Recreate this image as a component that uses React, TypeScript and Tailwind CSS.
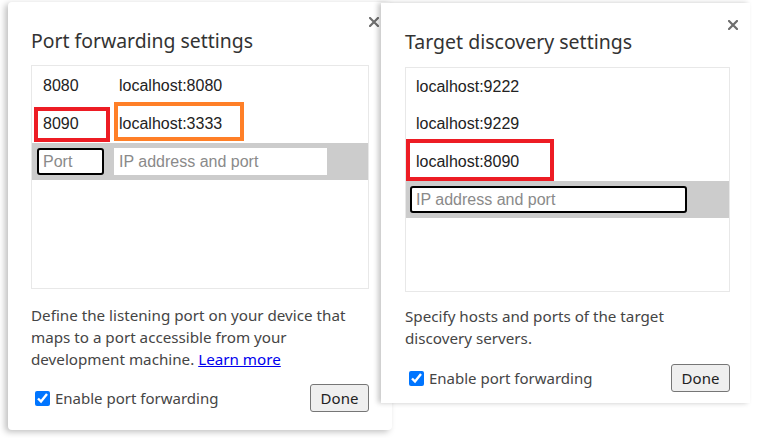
import React from "react";

const uiFont = { fontFamily: '"Noto Sans", "Open Sans", sans-serif' };

function CloseIcon() {
  return (
    <svg width="10" height="10" viewBox="0 0 10 10" className="text-[#6e6e6e]">
      <path d="M1 1 L9 9 M9 1 L1 9" stroke="currentColor" strokeWidth="2.2" strokeLinecap="square" />
    </svg>
  );
}

function Footer({ done }: { done: string }) {
  return (
    <div className="flex items-center justify-between">
      <label className="flex items-center gap-[5px] pl-[4px] text-[15px] text-[#454545]">
        <input type="checkbox" defaultChecked className="w-[15px] h-[15px] m-0 accent-[#0075ff]" />
        Enable port forwarding
      </label>
      <button className="h-[28px] w-[59px] rounded-[3px] border border-[#767676] bg-[#efefef] text-[15px] text-[#222]">
        {done}
      </button>
    </div>
  );
}

function PortForwarding() {
  return (
    <div
      className="relative w-[384px] h-[428px] shrink-0 rounded-[4px] bg-white shadow-[-3px_2px_6px_rgba(0,0,0,0.25)] px-[23px]"
      style={uiFont}
    >
      <div className="absolute right-[13px] top-[15px]">
        <CloseIcon />
      </div>
      <h2 className="pt-[25px] text-[19.4px] leading-[28px] text-[#333]">Port forwarding settings</h2>
      <div
        className="mt-[10px] h-[224px] border border-[#e8e8e8]"
        style={{ fontFamily: '"Liberation Sans", Arial, sans-serif' }}
      >
        <div className="flex h-[39px] items-center pt-[1px] text-[16px] text-[#222]">
          <span className="w-[76px] pl-[11px]">8080</span>
          <span className="pl-[11px]">localhost:8080</span>
        </div>
        <div className="flex h-[38px] items-center text-[16px] text-[#222]">
          <span className="ml-[2px] flex h-[35px] w-[76px] items-center border-[4px] border-[#ed1c24] pl-[5px]">8090</span>
          <span className="ml-[4px] -mt-[5px] flex h-[39px] w-[130px] items-center border-[4px] border-[#ff7f27] pl-[1px] pt-[5px]">
            localhost:3333
          </span>
        </div>
        <div className="flex h-[37px] items-center bg-[#cccccc]">
          <div className="ml-[5px] flex h-[27px] w-[67px] items-center rounded-[3px] border-2 border-black bg-white pl-[4px] text-[16px] text-[#8a8a8a]">
            Port
          </div>
          <div className="ml-[10px] flex h-[27px] w-[213px] items-center bg-white pl-[5px] text-[16px] text-[#8a8a8a]">
            IP address and port
          </div>
        </div>
      </div>
      <div className="mt-[15px] text-[15.2px] leading-[22px] text-[#454545]">
        <p>Define the listening port on your device that maps to a port accessible from your</p>
        <p>
          development machine. <span className="text-[#0000ee] underline">Learn more</span>
        </p>
      </div>
      <div className="mt-[14px]">
        <Footer done="Done" />
      </div>
    </div>
  );
}

function TargetDiscovery() {
  const hosts = ["localhost:9222", "localhost:9229"];
  return (
    <div
      className="relative -ml-[11px] mt-[1px] w-[369px] h-[400px] shrink-0 bg-white shadow-[-3px_0px_5px_rgba(0,0,0,0.22)] pl-[24px] pr-[20px]"
      style={uiFont}
    >
      <div className="absolute right-[12px] top-[17px]">
        <CloseIcon />
      </div>
      <h2 className="pt-[25px] text-[19.5px] leading-[28px] text-[#333]">Target discovery settings</h2>
      <div
        className="mt-[11px] h-[225px] border border-[#e8e8e8]"
        style={{ fontFamily: '"Liberation Sans", Arial, sans-serif' }}
      >
        {hosts.map((h) => (
          <div key={h} className="flex h-[37px] items-center pl-[10px] text-[16px] text-[#222]">
            {h}
          </div>
        ))}
        <div className="-mt-[3px] flex h-[42px] w-[148px] items-center border-[4px] border-[#ed1c24] pl-[6px] pt-[3px] text-[16px] text-[#222]">
          localhost:8090
        </div>
        <div className="flex h-[37px] items-center bg-[#cccccc]">
          <div className="ml-[4px] flex h-[27px] w-[277px] items-center rounded-[3px] border-2 border-black bg-white pl-[4px] text-[16px] text-[#8a8a8a]">
            IP address and port
          </div>
        </div>
      </div>
      <p className="mt-[13px] max-w-[290px] text-[15.2px] leading-[22px] text-[#454545]">
        Specify hosts and ports of the target discovery servers.
      </p>
      <div className="mt-[15px]">
        <Footer done="Done" />
      </div>
    </div>
  );
}

export default function App() {
  return (
    <div className="flex h-[438px] w-[757px] overflow-hidden bg-white pl-[8px] pt-[2px]">
      <PortForwarding />
      <TargetDiscovery />
    </div>
  );
}
